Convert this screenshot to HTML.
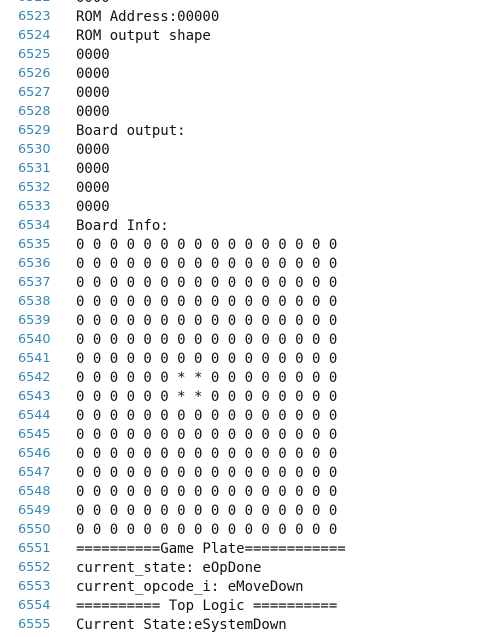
<!DOCTYPE html>
<html><head><meta charset="utf-8"><style>
html,body{margin:0;padding:0;background:#fff;width:497px;height:637px;overflow:hidden}
.wrap{position:absolute;top:-11px;left:0}
.l{height:19px;line-height:19px;white-space:pre;position:relative}
.n{position:absolute;left:18px;top:-1.5px;font-family:"DejaVu Sans",sans-serif;font-size:12.8px;color:#3288b8}
.t{position:absolute;left:76px;font-family:"DejaVu Sans Mono",monospace;font-size:14px;color:#111}
</style></head><body><div class="wrap">
<div class="l"><span class="n">6522</span><span class="t">0000</span></div>
<div class="l"><span class="n">6523</span><span class="t">ROM Address:00000</span></div>
<div class="l"><span class="n">6524</span><span class="t">ROM output shape</span></div>
<div class="l"><span class="n">6525</span><span class="t">0000</span></div>
<div class="l"><span class="n">6526</span><span class="t">0000</span></div>
<div class="l"><span class="n">6527</span><span class="t">0000</span></div>
<div class="l"><span class="n">6528</span><span class="t">0000</span></div>
<div class="l"><span class="n">6529</span><span class="t">Board output:</span></div>
<div class="l"><span class="n">6530</span><span class="t">0000</span></div>
<div class="l"><span class="n">6531</span><span class="t">0000</span></div>
<div class="l"><span class="n">6532</span><span class="t">0000</span></div>
<div class="l"><span class="n">6533</span><span class="t">0000</span></div>
<div class="l"><span class="n">6534</span><span class="t">Board Info:</span></div>
<div class="l"><span class="n">6535</span><span class="t">0 0 0 0 0 0 0 0 0 0 0 0 0 0 0 0</span></div>
<div class="l"><span class="n">6536</span><span class="t">0 0 0 0 0 0 0 0 0 0 0 0 0 0 0 0</span></div>
<div class="l"><span class="n">6537</span><span class="t">0 0 0 0 0 0 0 0 0 0 0 0 0 0 0 0</span></div>
<div class="l"><span class="n">6538</span><span class="t">0 0 0 0 0 0 0 0 0 0 0 0 0 0 0 0</span></div>
<div class="l"><span class="n">6539</span><span class="t">0 0 0 0 0 0 0 0 0 0 0 0 0 0 0 0</span></div>
<div class="l"><span class="n">6540</span><span class="t">0 0 0 0 0 0 0 0 0 0 0 0 0 0 0 0</span></div>
<div class="l"><span class="n">6541</span><span class="t">0 0 0 0 0 0 0 0 0 0 0 0 0 0 0 0</span></div>
<div class="l"><span class="n">6542</span><span class="t">0 0 0 0 0 0 * * 0 0 0 0 0 0 0 0</span></div>
<div class="l"><span class="n">6543</span><span class="t">0 0 0 0 0 0 * * 0 0 0 0 0 0 0 0</span></div>
<div class="l"><span class="n">6544</span><span class="t">0 0 0 0 0 0 0 0 0 0 0 0 0 0 0 0</span></div>
<div class="l"><span class="n">6545</span><span class="t">0 0 0 0 0 0 0 0 0 0 0 0 0 0 0 0</span></div>
<div class="l"><span class="n">6546</span><span class="t">0 0 0 0 0 0 0 0 0 0 0 0 0 0 0 0</span></div>
<div class="l"><span class="n">6547</span><span class="t">0 0 0 0 0 0 0 0 0 0 0 0 0 0 0 0</span></div>
<div class="l"><span class="n">6548</span><span class="t">0 0 0 0 0 0 0 0 0 0 0 0 0 0 0 0</span></div>
<div class="l"><span class="n">6549</span><span class="t">0 0 0 0 0 0 0 0 0 0 0 0 0 0 0 0</span></div>
<div class="l"><span class="n">6550</span><span class="t">0 0 0 0 0 0 0 0 0 0 0 0 0 0 0 0</span></div>
<div class="l"><span class="n">6551</span><span class="t">==========Game Plate============</span></div>
<div class="l"><span class="n">6552</span><span class="t">current_state: eOpDone</span></div>
<div class="l"><span class="n">6553</span><span class="t">current_opcode_i: eMoveDown</span></div>
<div class="l"><span class="n">6554</span><span class="t">========== Top Logic ==========</span></div>
<div class="l"><span class="n">6555</span><span class="t">Current State:eSystemDown</span></div>
</div></body></html>
